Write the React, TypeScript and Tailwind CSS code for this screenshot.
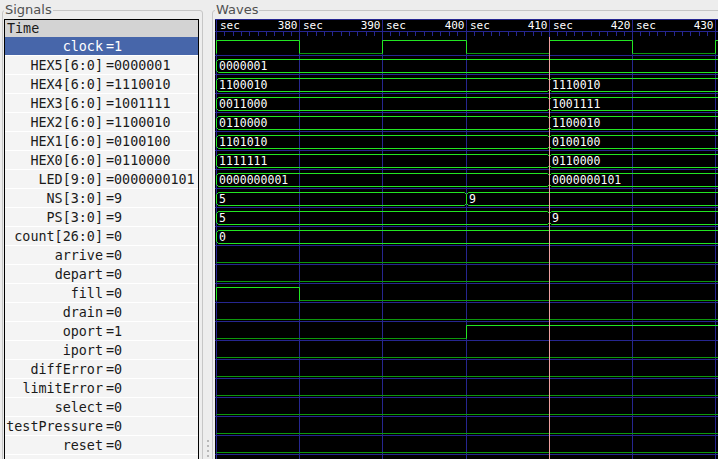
import React from 'react';

type Sig = { name: string; value: string };

const signals: Sig[] = [
  { name: 'clock', value: '=1' },
  { name: 'HEX5[6:0]', value: '=0000001' },
  { name: 'HEX4[6:0]', value: '=1110010' },
  { name: 'HEX3[6:0]', value: '=1001111' },
  { name: 'HEX2[6:0]', value: '=1100010' },
  { name: 'HEX1[6:0]', value: '=0100100' },
  { name: 'HEX0[6:0]', value: '=0110000' },
  { name: 'LED[9:0]', value: '=0000000101' },
  { name: 'NS[3:0]', value: '=9' },
  { name: 'PS[3:0]', value: '=9' },
  { name: 'count[26:0]', value: '=0' },
  { name: 'arrive', value: '=0' },
  { name: 'depart', value: '=0' },
  { name: 'fill', value: '=0' },
  { name: 'drain', value: '=0' },
  { name: 'oport', value: '=1' },
  { name: 'iport', value: '=0' },
  { name: 'diffError', value: '=0' },
  { name: 'limitError', value: '=0' },
  { name: 'select', value: '=0' },
  { name: 'testPressure', value: '=0' },
  { name: 'reset', value: '=0' },
];

// wave canvas geometry (page coords -> svg coords)
const OX = 215;
const MAJ = [216, 299, 382, 466, 549, 632, 715];
const LABELS = ['380', '390', '400', '410', '420', '430'];
const GRID = '#262690';
const HI = '#22e622';
const LO = '#0c980c';
const CURSOR = 549;
const END = 760;
const MONO = '"DejaVu Sans Mono", "Liberation Mono", monospace';

const sx = (x: number) => x - OX + 0.5;
const rowTop = (i: number) => 18 + 19 * i;

type Row =
  | { kind: 'bus'; segs: [number, string][] }
  | { kind: 'bit'; start: 0 | 1; edges: number[] };

const zero: Row = { kind: 'bit', start: 0, edges: [] };

const rows: Row[] = [
  { kind: 'bit', start: 1, edges: MAJ.slice(1) },
  { kind: 'bus', segs: [[216, '0000001']] },
  { kind: 'bus', segs: [[216, '1100010'], [549, '1110010']] },
  { kind: 'bus', segs: [[216, '0011000'], [549, '1001111']] },
  { kind: 'bus', segs: [[216, '0110000'], [549, '1100010']] },
  { kind: 'bus', segs: [[216, '1101010'], [549, '0100100']] },
  { kind: 'bus', segs: [[216, '1111111'], [549, '0110000']] },
  { kind: 'bus', segs: [[216, '0000000001'], [549, '0000000101']] },
  { kind: 'bus', segs: [[216, '5'], [466, '9']] },
  { kind: 'bus', segs: [[216, '5'], [549, '9']] },
  { kind: 'bus', segs: [[216, '0']] },
  zero,
  zero,
  { kind: 'bit', start: 1, edges: [299] },
  zero,
  { kind: 'bit', start: 0, edges: [466] },
  zero,
  zero,
  zero,
  zero,
  zero,
  zero,
];

function BitWave({ i, start, edges }: { i: number; start: 0 | 1; edges: number[] }) {
  const R = rowTop(i);
  const hy = R + 3.5;
  const ly = R + 16.5;
  const xs = [216, ...edges, END];
  const out: React.ReactNode[] = [];
  let level = start;
  for (let k = 0; k < xs.length - 1; k++) {
    const y = level ? hy : ly;
    out.push(
      <line key={'h' + k} x1={sx(xs[k])} x2={sx(xs[k + 1])} y1={y} y2={y} stroke={level ? HI : LO} />
    );
    if (k > 0 || start === 1) {
      out.push(<line key={'v' + k} x1={sx(xs[k])} x2={sx(xs[k])} y1={hy} y2={ly} stroke={HI} />);
    }
    level = level ? 0 : 1;
  }
  return <g>{out}</g>;
}

function BusWave({ i, segs }: { i: number; segs: [number, string][] }) {
  const R = rowTop(i);
  const T = R + 3.5;
  const B = R + 16.5;
  return (
    <g>
      {segs.map(([a, label], k) => {
        const b = k + 1 < segs.length ? segs[k + 1][0] : END;
        const x1 = sx(a);
        const x2 = sx(b);
        const d = `M${x1 + 2} ${T} L${x2 - 2} ${T} L${x2} ${T + 2} L${x2} ${B - 2} L${x2 - 2} ${B} L${x1 + 2} ${B} L${x1} ${B - 2} L${x1} ${T + 2} Z`;
        return (
          <g key={k}>
            <path d={d} fill="none" stroke={HI} />
            <text x={x1 + 2.5} y={R + 14} fill="#ffffff" fontSize={11.5} fontFamily={MONO}>
              {label}
            </text>
          </g>
        );
      })}
    </g>
  );
}

function Waves() {
  const W = 503;
  const H = 440;
  const ticks: number[] = [];
  MAJ.forEach((m) => {
    for (let j = 1; j < 10; j++) ticks.push(Math.round(m + j * 8.32));
  });
  return (
    <svg width={W} height={H} className="block -mt-px ml-[2px]">
      <rect x={0} y={0} width={W} height={H} fill="#000000" />
      <line x1={0} x2={W} y1={0.5} y2={0.5} stroke={GRID} />
      {/* ruler */}
      <line x1={0} x2={W} y1={12.5} y2={12.5} stroke={GRID} />
      {ticks.map((t, k) => (
        <line key={k} x1={sx(t)} x2={sx(t)} y1={12} y2={17} stroke={GRID} />
      ))}
      {MAJ.slice(0, 6).map((m, k) => (
        <text key={'s' + k} x={sx(m) + 3.5} y={9.5} fill="#ffffff" fontSize={11} fontFamily={MONO}>
          sec
        </text>
      ))}
      {LABELS.map((l, k) => (
        <text key={'l' + k} x={sx(MAJ[k + 1]) - 2} y={9.5} fill="#ffffff" fontSize={11} fontFamily={MONO} textAnchor="end">
          {l}
        </text>
      ))}
      {/* grid */}
      {MAJ.map((m) => (
        <line key={'g' + m} x1={sx(m)} x2={sx(m)} y1={0} y2={H} stroke={GRID} />
      ))}
      {rows.map((_, i) => (
        <line key={'r' + i} x1={0} x2={W} y1={rowTop(i) + 18.5} y2={rowTop(i) + 18.5} stroke={GRID} />
      ))}
      {/* traces */}
      {rows.map((r, i) =>
        r.kind === 'bus' ? (
          <BusWave key={i} i={i} segs={r.segs} />
        ) : (
          <BitWave key={i} i={i} start={r.start} edges={r.edges} />
        )
      )}
      {/* cursor */}
      <line x1={sx(CURSOR)} x2={sx(CURSOR)} y1={18} y2={H} stroke="#f0a0a0" />
    </svg>
  );
}

export default function App() {
  return (
    <div className="w-[718px] h-[459px] overflow-hidden bg-[#ededed] flex items-start font-['DejaVu_Sans',sans-serif]">
      {/* Signals pane */}
      <fieldset className="ml-[2px] w-[201px] h-[480px] shrink-0 border border-[#c6c6c6] rounded-[3px] min-w-0">
        <legend className="ml-[1px] px-[1px] text-[13px] leading-[20px] text-[#505050]">Signals</legend>
        <div className="-mt-px ml-[1px] w-[195px] h-[460px] border border-black bg-[#f4f4f4] overflow-hidden font-['DejaVu_Sans_Mono',monospace] text-[13.4px] text-[#1a1a1a]">
          <div className="h-[17px] bg-[#d3d3d3] flex items-center pl-[2px] leading-[17px]">Time</div>
          {signals.map((s, i) => (
            <div
              key={s.name}
              className={
                i === 0
                  ? 'h-[19px] border-b border-white bg-[#4766aa] text-white flex items-start pt-[2px] leading-[16px]'
                  : 'h-[19px] border-b border-white flex items-start pt-[2px] leading-[16px]'
              }
            >
              <span className="w-[98px] text-right whitespace-pre">{s.name}</span>
              <span className="ml-[3px] whitespace-pre">{s.value}</span>
            </div>
          ))}
          <div className="h-[19px] border-b border-white" />
        </div>
      </fieldset>

      {/* pane splitter */}
      <div className="w-[9px] h-[459px] shrink-0 flex flex-col items-center justify-end gap-[3px] pb-[2px]">
        <div className="w-[2px] h-[2px] bg-[#b8b8b8]" />
        <div className="w-[2px] h-[2px] bg-[#b8b8b8]" />
        <div className="w-[2px] h-[2px] bg-[#b8b8b8]" />
        <div className="w-[2px] h-[2px] bg-[#b8b8b8]" />
      </div>

      {/* Waves pane */}
      <fieldset className="w-[520px] h-[480px] shrink-0 border border-[#c6c6c6] rounded-[3px] min-w-0">
        <legend className="ml-[2px] px-[1px] text-[13px] leading-[20px] text-[#505050]">Waves</legend>
        <Waves />
      </fieldset>
    </div>
  );
}
